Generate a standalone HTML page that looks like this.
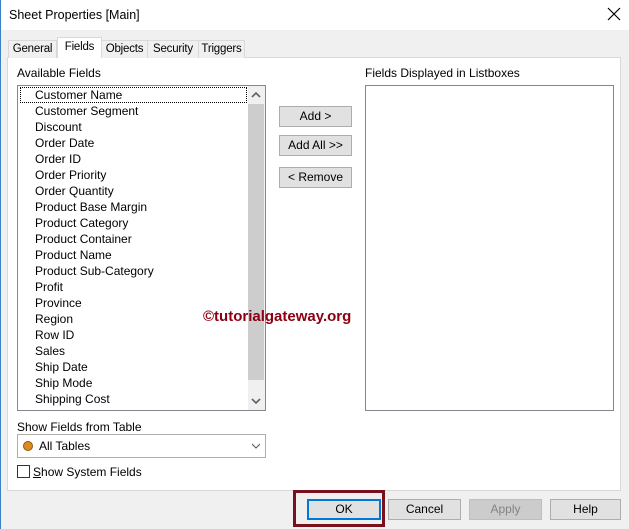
<!DOCTYPE html>
<html><head><style>
*{margin:0;padding:0;box-sizing:border-box}
body{width:629px;height:529px;background:#f0f0f0;font-family:"Liberation Sans",sans-serif;font-size:12px;color:#000;position:relative;overflow:hidden}
.a{position:absolute}
.title{left:0;top:0;width:629px;height:30px;background:#fff}
.tab{position:absolute;top:40px;height:18px;border:1px solid #d9d9d9;border-bottom:none;background:#f0f0f0;text-align:center;line-height:17px;font-size:11.5px;letter-spacing:-0.2px}
.btn{position:absolute;background:#e1e1e1;border:1px solid #adadad;text-align:center;line-height:18px}
.lst div{height:16px;line-height:16px;padding-left:17px}
</style></head><body>
<div class="a title"></div>
<div class="a" style="left:0;top:0;width:1px;height:529px;background:#3c7fc4"></div>
<div class="a" style="left:9px;top:8px;font-size:12.5px">Sheet Properties [Main]</div>
<svg class="a" style="left:607px;top:7px" width="14" height="14"><path d="M1 1L13 13M13 1L1 13" stroke="#000" stroke-width="1.2"/></svg>
<div class="a" style="left:7px;top:57px;width:614px;height:434px;background:#fff;border:1px solid #d9d9d9"></div>
<div class="tab" style="left:8px;width:49px">General</div>
<div class="tab" style="left:101px;width:47px">Objects</div>
<div class="tab" style="left:147px;width:52px">Security</div>
<div class="tab" style="left:198px;width:47px">Triggers</div>
<div class="tab" style="left:57px;top:37px;height:21px;width:45px;background:#fff;line-height:18px">Fields</div>
<div class="a" style="left:17px;top:66px">Available Fields</div>
<div class="a" style="left:365px;top:66px">Fields Displayed in Listboxes</div>
<div class="a lst" style="left:17px;top:85px;width:249px;height:326px;background:#fff;border:1px solid #828790;padding-top:1px">
<div style="outline:1px dotted #000;outline-offset:-1px;margin-right:18px;margin-left:2px;padding-left:15px">Customer Name</div>
<div>Customer Segment</div><div>Discount</div><div>Order Date</div><div>Order ID</div><div>Order Priority</div><div>Order Quantity</div><div>Product Base Margin</div><div>Product Category</div><div>Product Container</div><div>Product Name</div><div>Product Sub-Category</div><div>Profit</div><div>Province</div><div>Region</div><div>Row ID</div><div>Sales</div><div>Ship Date</div><div>Ship Mode</div><div>Shipping Cost</div>
</div>
<div class="a" style="left:248px;top:86px;width:17px;height:324px;background:#f0f0f0"></div>
<div class="a" style="left:248px;top:104px;width:16px;height:276px;background:#cdcdcd"></div>
<svg class="a" style="left:251px;top:91px" width="10" height="8"><path d="M1 6L5 2L9 6" stroke="#606060" stroke-width="1.6" fill="none"/></svg>
<svg class="a" style="left:251px;top:397px" width="10" height="8"><path d="M1 2L5 6L9 2" stroke="#606060" stroke-width="1.6" fill="none"/></svg>
<div class="a" style="left:365px;top:85px;width:249px;height:326px;background:#fff;border:1px solid #828790"></div>
<div class="btn" style="left:279px;top:106px;width:73px;height:21px">Add &gt;</div>
<div class="btn" style="left:279px;top:135px;width:73px;height:21px">Add All &gt;&gt;</div>
<div class="btn" style="left:279px;top:167px;width:73px;height:21px">&lt; Remove</div>
<div class="a" style="left:203px;top:308px;font-weight:bold;font-size:15px;color:#8b0012">©tutorialgateway.org</div>
<div class="a" style="left:17px;top:420px">Show Fields from Table</div>
<div class="a" style="left:17px;top:434px;width:249px;height:24px;background:#fff;border:1px solid #adadad"></div>
<div class="a" style="left:23px;top:441px;width:10px;height:10px;border-radius:50%;background:#e08a1e;border:1px solid #8a5a10"></div>
<div class="a" style="left:39px;top:439px">All Tables</div>
<svg class="a" style="left:251px;top:443px" width="10" height="7"><path d="M1 1L5 5L9 1" stroke="#555" stroke-width="1" fill="none"/></svg>
<div class="a" style="left:17px;top:465px;width:13px;height:13px;border:1px solid #333;background:#fff"></div>
<div class="a" style="left:33px;top:465px"><u>S</u>how System Fields</div>
<div class="a" style="left:293px;top:490px;width:92px;height:37px;border:3px solid #7a0f1e"></div>
<div class="btn" style="left:307px;top:499px;width:74px;height:21px;border:2px solid #0078d7;line-height:17px">OK</div>
<div class="btn" style="left:388px;top:499px;width:73px;height:21px">Cancel</div>
<div class="btn" style="left:469px;top:499px;width:73px;height:21px;background:#ccc;border-color:#bfbfbf;color:#838383">Apply</div>
<div class="btn" style="left:550px;top:499px;width:71px;height:21px">Help</div>
</body></html>
